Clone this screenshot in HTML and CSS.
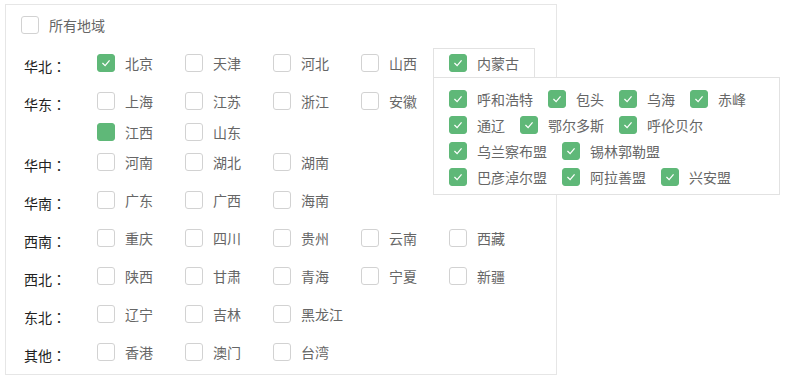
FILE: index.html
```html
<!DOCTYPE html>
<html lang="zh-CN">
<head>
    <meta charset="UTF-8">
    <meta name="viewport" content="width=device-width, initial-scale=1.0">
    <title>地域选择</title>
    <link rel="stylesheet" href="styles.css">
</head>
<body>
    <div class="region-picker">
        <label class="check all"><span class="box"></span><span class="text">所有地域</span></label>

        <div class="group">
            <div class="group-name">华北：</div>
            <div class="items">
                <label class="check checked"><span class="box"><svg viewBox="0 0 18 18"><polyline points="5,9 8,12 13,6"/></svg></span><span class="text">北京</span></label>
                <label class="check"><span class="box"></span><span class="text">天津</span></label>
                <label class="check"><span class="box"></span><span class="text">河北</span></label>
                <label class="check"><span class="box"></span><span class="text">山西</span></label>
                <div class="check checked open">
                    <span class="tab"></span>
                    <span class="box"><svg viewBox="0 0 18 18"><polyline points="5,9 8,12 13,6"/></svg></span><span class="text">内蒙古</span>
                    <div class="dropdown">
                        <label class="check checked"><span class="box"><svg viewBox="0 0 18 18"><polyline points="5,9 8,12 13,6"/></svg></span><span class="text">呼和浩特</span></label>
                        <label class="check checked"><span class="box"><svg viewBox="0 0 18 18"><polyline points="5,9 8,12 13,6"/></svg></span><span class="text">包头</span></label>
                        <label class="check checked"><span class="box"><svg viewBox="0 0 18 18"><polyline points="5,9 8,12 13,6"/></svg></span><span class="text">乌海</span></label>
                        <label class="check checked"><span class="box"><svg viewBox="0 0 18 18"><polyline points="5,9 8,12 13,6"/></svg></span><span class="text">赤峰</span></label>
                        <label class="check checked"><span class="box"><svg viewBox="0 0 18 18"><polyline points="5,9 8,12 13,6"/></svg></span><span class="text">通辽</span></label>
                        <label class="check checked"><span class="box"><svg viewBox="0 0 18 18"><polyline points="5,9 8,12 13,6"/></svg></span><span class="text">鄂尔多斯</span></label>
                        <label class="check checked"><span class="box"><svg viewBox="0 0 18 18"><polyline points="5,9 8,12 13,6"/></svg></span><span class="text">呼伦贝尔</span></label>
                        <label class="check checked"><span class="box"><svg viewBox="0 0 18 18"><polyline points="5,9 8,12 13,6"/></svg></span><span class="text">乌兰察布盟</span></label>
                        <label class="check checked"><span class="box"><svg viewBox="0 0 18 18"><polyline points="5,9 8,12 13,6"/></svg></span><span class="text">锡林郭勒盟</span></label>
                        <label class="check checked"><span class="box"><svg viewBox="0 0 18 18"><polyline points="5,9 8,12 13,6"/></svg></span><span class="text">巴彦淖尔盟</span></label>
                        <label class="check checked"><span class="box"><svg viewBox="0 0 18 18"><polyline points="5,9 8,12 13,6"/></svg></span><span class="text">阿拉善盟</span></label>
                        <label class="check checked"><span class="box"><svg viewBox="0 0 18 18"><polyline points="5,9 8,12 13,6"/></svg></span><span class="text">兴安盟</span></label>
                    </div>
                </div>
            </div>
        </div>

        <div class="group east">
            <div class="group-name">华东：</div>
            <div class="items">
                <label class="check"><span class="box"></span><span class="text">上海</span></label>
                <label class="check"><span class="box"></span><span class="text">江苏</span></label>
                <label class="check"><span class="box"></span><span class="text">浙江</span></label>
                <label class="check"><span class="box"></span><span class="text">安徽</span></label>
                <label class="check hover"><span class="box"></span><span class="text">江西</span></label>
                <label class="check"><span class="box"></span><span class="text">山东</span></label>
            </div>
        </div>

        <div class="group">
            <div class="group-name">华中：</div>
            <div class="items">
                <label class="check"><span class="box"></span><span class="text">河南</span></label>
                <label class="check"><span class="box"></span><span class="text">湖北</span></label>
                <label class="check"><span class="box"></span><span class="text">湖南</span></label>
            </div>
        </div>

        <div class="group">
            <div class="group-name">华南：</div>
            <div class="items">
                <label class="check"><span class="box"></span><span class="text">广东</span></label>
                <label class="check"><span class="box"></span><span class="text">广西</span></label>
                <label class="check"><span class="box"></span><span class="text">海南</span></label>
            </div>
        </div>

        <div class="group">
            <div class="group-name">西南：</div>
            <div class="items">
                <label class="check"><span class="box"></span><span class="text">重庆</span></label>
                <label class="check"><span class="box"></span><span class="text">四川</span></label>
                <label class="check"><span class="box"></span><span class="text">贵州</span></label>
                <label class="check"><span class="box"></span><span class="text">云南</span></label>
                <label class="check"><span class="box"></span><span class="text">西藏</span></label>
            </div>
        </div>

        <div class="group">
            <div class="group-name">西北：</div>
            <div class="items">
                <label class="check"><span class="box"></span><span class="text">陕西</span></label>
                <label class="check"><span class="box"></span><span class="text">甘肃</span></label>
                <label class="check"><span class="box"></span><span class="text">青海</span></label>
                <label class="check"><span class="box"></span><span class="text">宁夏</span></label>
                <label class="check"><span class="box"></span><span class="text">新疆</span></label>
            </div>
        </div>

        <div class="group">
            <div class="group-name">东北：</div>
            <div class="items">
                <label class="check"><span class="box"></span><span class="text">辽宁</span></label>
                <label class="check"><span class="box"></span><span class="text">吉林</span></label>
                <label class="check"><span class="box"></span><span class="text">黑龙江</span></label>
            </div>
        </div>

        <div class="group">
            <div class="group-name">其他：</div>
            <div class="items">
                <label class="check"><span class="box"></span><span class="text">香港</span></label>
                <label class="check"><span class="box"></span><span class="text">澳门</span></label>
                <label class="check"><span class="box"></span><span class="text">台湾</span></label>
            </div>
        </div>
    </div>
</body>
</html>
```

FILE: styles.css
```css
body {
    margin: 0;
    font-family: "Noto Sans CJK SC", "Liberation Sans", sans-serif;
    font-size: 14px;
    color: #666;
    background-color: #fff;
}

.region-picker {
    width: 552px;
    box-sizing: border-box;
    margin: 4px 0 0 5px;
    padding: 11px 0 13px 0;
    border: 1px solid #e6e6e6;
}

.check {
    display: flex;
    align-items: center;
    height: 18px;
    line-height: 18px;
    cursor: pointer;
}

.check .box {
    flex: none;
    width: 18px;
    height: 18px;
    box-sizing: border-box;
    border: 1px solid #d2d2d2;
    border-radius: 3px;
    background-color: #fff;
    margin-right: 10px;
}

.check .box svg {
    display: block;
    width: 16px;
    height: 16px;
}

.check .box polyline {
    fill: none;
    stroke: #fff;
    stroke-width: 1.4;
}

.check.checked .box,
.check.hover .box {
    background-color: #5fb878;
    border-color: #5fb878;
}

.check .text {
    white-space: nowrap;
}

.check.all {
    padding-left: 15px;
    margin-bottom: 20px;
}

.group {
    display: flex;
    padding-left: 18px;
    margin-bottom: 20px;
}

.group:last-child {
    margin-bottom: 0;
}

/* centred full-width colon, like the original UI font */
.group-name {
    width: 73px;
    height: 18px;
    flex: none;
    color: #222;
    line-height: 25px;
    font-family: "Noto Sans CJK JP", "Noto Sans CJK SC", sans-serif;
    font-feature-settings: "locl" 0;
}

.items {
    display: flex;
    flex-wrap: wrap;
    row-gap: 13px;
}

.items > .check {
    width: 88px;
}

.group.east {
    margin-bottom: 12px;
}

.group.east .items {
    max-width: 352px;
}

/* opened province with its city list */
.check.open {
    position: relative;
}

.check.open .tab {
    position: absolute;
    left: -16px;
    top: -6px;
    width: 102px;
    height: 30px;
    box-sizing: border-box;
    border: 1px solid #e2e2e2;
    pointer-events: none;
}

.dropdown {
    position: absolute;
    left: -16px;
    top: 23px;
    z-index: 2;
    width: 347px;
    box-sizing: border-box;
    padding: 12px 16px 8px 15px;
    background-color: #fff;
    border: 1px solid #e2e2e2;
    display: flex;
    flex-wrap: wrap;
    column-gap: 15px;
    row-gap: 8px;
}
```
